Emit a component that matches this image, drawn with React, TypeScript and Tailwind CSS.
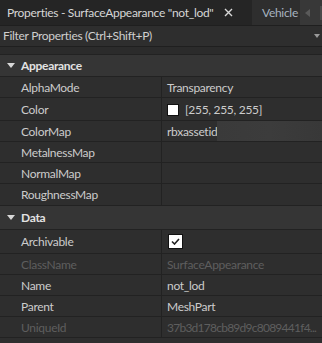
import React from 'react';

type Row = {
  name: string;
  value?: React.ReactNode;
  disabled?: boolean;
  h?: string;
};

function Caret() {
  return (
    <svg width="8" height="6" viewBox="0 0 8 6" className="shrink-0">
      <path d="M0 0 H8 L4 5 Z" fill="#d8d8d8" />
    </svg>
  );
}

function Header({ label, h }: { label: string; h: string }) {
  return (
    <div className={`flex items-center bg-[#353535] border-b border-[#222] ${h}`}>
      <div className="w-[21px] flex justify-center pl-[1px]">
        <Caret />
      </div>
      <span className="font-bold text-[#e2e2e2] pt-[1px]">{label}</span>
    </div>
  );
}

function PropRow({ name, value, disabled, h = 'h-[21px]' }: Row) {
  const tone = disabled ? 'text-[#5e5e5e]' : 'text-[#cccccc]';
  return (
    <div className={`flex bg-[#2e2e2e] border-b border-[#222] ${h}`}>
      <div className={`w-[162px] shrink-0 flex items-center pl-[21px] pt-[1px] border-r border-[#222] ${tone}`}>
        {name}
      </div>
      <div className={`flex-1 min-w-0 flex items-center pl-[5px] pt-[1px] whitespace-nowrap overflow-hidden ${tone}`}>
        {value}
      </div>
    </div>
  );
}

export default function App() {
  return (
    <div
      className="w-[322px] h-[343px] overflow-hidden bg-[#2e2e2e] text-[12px] leading-none tracking-[-0.3px] select-none"
      style={{ fontFamily: 'Lato, "Open Sans", sans-serif' }}
    >
      {/* Tab strip */}
      <div className="flex h-[26px] bg-[#2b2b2b] border-b border-[#1f1f1f]">
        <div className="flex items-center w-[252px] bg-[#252525] pl-[7px] text-[#d6d6d6]">
          <span className="whitespace-nowrap">Properties - SurfaceAppearance "not_lod"</span>
          <span className="ml-[10px]">
            <svg width="9" height="9" viewBox="0 0 9 9" className="block">
              <path d="M1 1 L8 8 M8 1 L1 8" stroke="#d8d8d8" strokeWidth="1.4" />
            </svg>
          </span>
        </div>
        <div className="flex items-center w-[48px] bg-[#2e2e2e] pl-[10px] text-[#a7b3c0]">Vehicle</div>
        <div className="flex-1 flex items-center bg-[#383838] pl-[5px]">
          <svg width="5" height="8" viewBox="0 0 5 8">
            <path d="M5 0 V8 L0 4 Z" fill="#5a5a5a" />
          </svg>
          <div className="ml-auto w-[2px] h-[14px] bg-[#4a4a4a]" />
        </div>
      </div>

      {/* Filter */}
      <div className="flex items-center h-[21px] bg-[#2e2e2e] pl-[3px] pr-[2px] text-[#cfcfcf] border-b border-[#1f1f1f]">
        <span>Filter Properties (Ctrl+Shift+P)</span>
        <svg width="6" height="4" viewBox="0 0 6 4" className="ml-auto">
          <path d="M0 0 H6 L3 4 Z" fill="#9a9a9a" />
        </svg>
      </div>
      <div className="h-[8px] bg-[#2b2b2b] border-b border-[#222]" />

      <Header label="Appearance" h="h-[22px]" />
      <PropRow name="AlphaMode" value="Transparency" />
      <PropRow
        name="Color"
        h="h-[23px]"
        value={
          <>
            <span className="inline-block w-[12px] h-[12px] bg-white border border-[#111] mr-[6px]" />
            <span>[255, 255, 255]</span>
          </>
        }
      />
      <PropRow
        name="ColorMap"
        value={
          <div className="flex items-center h-full w-full">
            <span>rbxassetid</span>
            <div className="flex-1 h-[21px] -mt-[1px] bg-gradient-to-r from-[#3a3a3a] via-[#3c3c3c] to-[#383838]" />
          </div>
        }
      />
      <PropRow name="MetalnessMap" />
      <PropRow name="NormalMap" />
      <PropRow name="RoughnessMap" h="h-[22px]" />
      <Header label="Data" h="h-[24px]" />
      <div className="flex h-[24px] bg-[#2e2e2e] border-b border-[#222]">
        <div className="w-[162px] shrink-0 flex items-center pl-[21px] pt-[1px] border-r border-[#222] text-[#cccccc]">
          Archivable
        </div>
        <div className="flex-1 flex items-center pl-[6px]">
          <span className="flex items-center justify-center w-[15px] h-[15px] bg-white border border-[#111]">
            <svg width="9" height="7" viewBox="0 0 9 7">
              <path d="M1 3.5 L3.5 6 L8 1" stroke="#222" strokeWidth="1.6" fill="none" />
            </svg>
          </span>
        </div>
      </div>
      <PropRow name="ClassName" value="SurfaceAppearance" disabled />
      <PropRow name="Name" value="not_lod" />
      <PropRow name="Parent" value="MeshPart" />
      <PropRow
        name="UniqueId"
        value={<span className="tracking-[-0.75px]">37b3d178cb89d9c8089441f4...</span>}
        disabled
      />
    </div>
  );
}
